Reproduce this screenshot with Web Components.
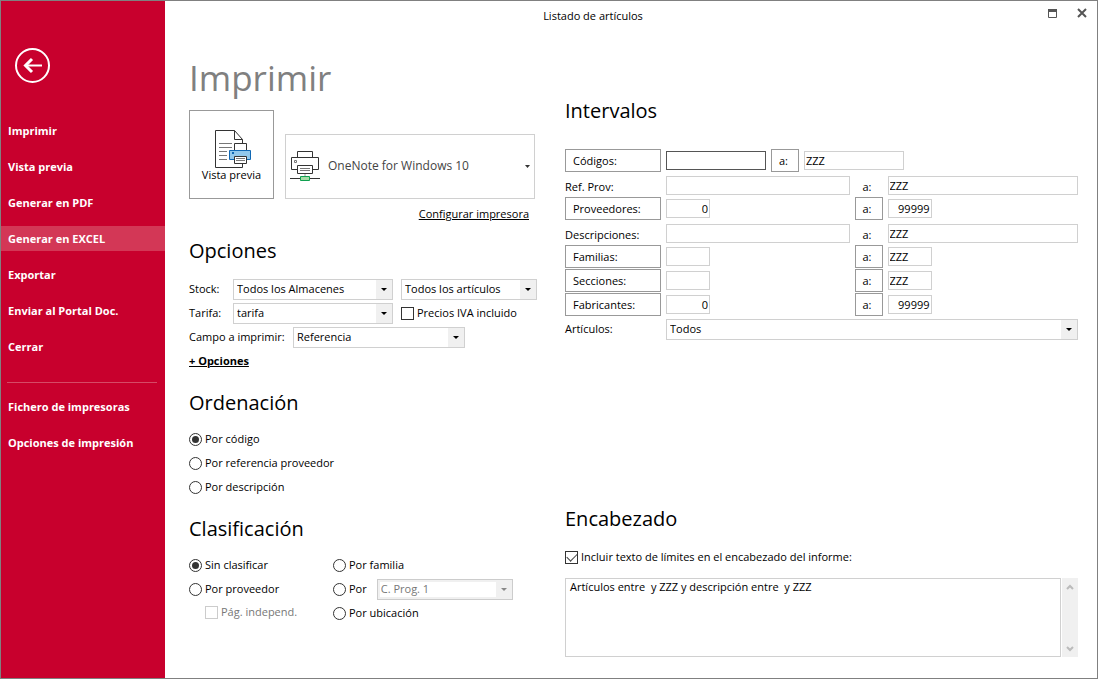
<!DOCTYPE html>
<html lang="es">
<head>
<meta charset="utf-8">
<title>Listado de artículos</title>
<style>
  body { margin: 0; font: 11px/16px "Open Sans", "Noto Sans", sans-serif; color: #000; background: #fff; }
</style>
</head>
<body>
<print-window></print-window>

<script>
const define = (name, html, setup) => {
  const template = document.createElement('template');
  template.innerHTML = `<style>*{box-sizing:border-box}button,input,select,textarea{font:inherit;color:inherit;margin:0;border-radius:0}</style>` + html;
  customElements.define(name, class extends HTMLElement {
    constructor() {
      super();
      this.attachShadow({ mode: 'open' }).append(template.content.cloneNode(true));
    }
    connectedCallback() {
      if (this.ready) return;
      this.ready = true;
      if (setup) setup(this, this.shadowRoot);
    }
  });
};

/* Sidebar link */
define('nav-item', `
  <style>
    :host { display: block; }
    a { display: block; padding: 0 7px; line-height: 25px; color: #fff; text-decoration: none; font-weight: 700; white-space: nowrap; }
    :host([active]) a { background: #d33756; }
    a:hover { background: #d33756; }
  </style>
  <a href="#"><slot></slot></a>`);

/* Red sidebar with the back button */
define('side-nav', `
  <style>
    :host { display: flex; flex-direction: column; background: #c8002d; color: #fff; padding-top: 47px; }
    .back { align-self: flex-start; margin-left: 14px; padding: 0; border: 0; background: none; width: 36px; height: 36px; }
    svg { display: block; }
    nav { display: flex; flex-direction: column; gap: 11px; margin-top: 34px; }
  </style>
  <button class="back" aria-label="Volver">
    <svg width="36" height="36" viewBox="0 0 36 36" fill="none" stroke="#fff">
      <circle cx="17.5" cy="17.5" r="16.5" stroke-width="2"/>
      <path d="M10 17.5h17" stroke-width="2"/>
      <path d="M17 11l-6.500 6.500 6.500 6.500" stroke-width="3"/>
    </svg>
  </button>
  <nav><slot></slot></nav>`);

/* Title bar with window controls */
define('title-bar', `
  <style>
    :host { display: flex; height: 30px; align-items: stretch; }
    .title { flex: 1; text-align: center; line-height: 30px; padding-right: 16px; }
    button { width: 30px; height: 24px; padding: 0; border: 0; background: none; display: grid; place-items: center; }
  </style>
  <div class="title"><slot></slot></div>
  <button aria-label="Maximizar"><svg width="9" height="9"><path d="M.5.5h8v8h-8z" fill="none" stroke="#555"/><path d="M0 0h9v3H0z" fill="#555"/></svg></button>
  <button aria-label="Cerrar ventana"><svg width="10" height="10"><path d="M1 1l8 8M9 1L1 9" stroke="#555" stroke-width="2"/></svg></button>`);

/* Headed block */
define('form-section', `
  <style>
    :host { display: block; }
    h2 { margin: 0 0 var(--head-gap, 8px); font-size: 20px; line-height: 32px; font-weight: 400; }
  </style>
  <h2></h2><slot></slot>`,
  (el, root) => root.querySelector('h2').textContent = el.getAttribute('heading'));

/* Drop-down, with an optional caption before it */
define('field-select', `
  <style>
    :host { display: flex; align-items: center; height: 24px; }
    label { width: var(--label, auto); flex: none; }
    .box { display: grid; grid-template-columns: 1fr 16px; flex: 1; height: 21px; border: 1px solid #d0d0d0; background: #fff; }
    select { grid-area: 1 / 1 / 2 / 3; min-width: 0; appearance: none; border: 0; background: none; padding: 0 18px 0 3px; outline-offset: -1px; opacity: 1; }
    .arrow { grid-area: 1 / 2; background: #f0f0f0; display: grid; place-items: center; pointer-events: none; }
    :host([disabled]) .box { background: #fff; border-color: #ccc; outline: 2px solid #f0f0f0; outline-offset: -3px; color: #777; fill: #888; }
  </style>
  <label for="s"></label>
  <div class="box">
    <select id="s"><option></option></select>
    <span class="arrow"><svg width="6" height="3"><path d="M0 0h6L3 3z"/></svg></span>
  </div>`,
  (el, root) => {
    const label = root.querySelector('label'), select = root.querySelector('select');
    const text = el.getAttribute('label');
    if (text) label.textContent = text;
    else { label.remove(); select.setAttribute('aria-label', el.getAttribute('name')); }
    root.querySelector('option').textContent = el.getAttribute('value');
    select.disabled = el.hasAttribute('disabled');
  });

/* Tick box or radio button with its label */
define('choice-item', `
  <style>
    :host { display: flex; align-items: center; height: 24px; }
    label { display: flex; align-items: center; gap: 3px; white-space: nowrap; }
    input { appearance: none; flex: none; width: 13px; height: 13px; border: 1px solid #333; background: #fff; display: grid; place-items: center; }
    input[type=radio] { border-radius: 50%; }
    input[type=radio]:checked::after { content: ""; width: 7px; height: 7px; border-radius: 50%; background: #333; }
    input[type=checkbox]:checked::after { content: ""; width: 9px; height: 5px; border: solid #444; border-width: 0 0 1px 1px; transform: translateY(-1px) rotate(-45deg); }
    input:disabled { border-color: #ccc; }
    :host([disabled]) { color: #777; }
  </style>
  <label><input><span><slot></slot></span></label>`,
  (el, root) => {
    const input = root.querySelector('input');
    input.type = el.getAttribute('type') || 'radio';
    input.checked = el.hasAttribute('checked');
    input.disabled = el.hasAttribute('disabled');
    el.input = input;
    input.addEventListener('change', () => {
      if (input.type !== 'radio') return;
      const group = el.getAttribute('group');
      el.getRootNode().querySelectorAll(`choice-item[group="${group}"]`).forEach(other => {
        if (other !== el) other.input.checked = false;
      });
    });
  });

/* One "from / to" line; "pick" turns its captions into lookup buttons */
define('range-row', `
  <style>
    :host { display: grid; grid-template-columns: 96px 184fr 28px 191fr; column-gap: 5px; align-items: center; height: 23px; }
    :host([size=code]) { grid-template-columns: 96px 100px 28px 100px; }
    button { height: 23px; border: 1px solid #999; background: #fff; padding: 0 7px; text-align: left; }
    label { line-height: 23px; padding-top: 2px; }
    button.to { padding: 0 7px; }
    label.to { padding-left: 8px; }
    input { width: 100%; height: 19px; border: 1px solid #d0d0d0; background: #fff; padding: 0 1px 1px; outline: 0; }
    :host([size=code]) .from { border-color: #555; }
    :host([size=short]) input { width: 44px; }
    :host([numeric]) input { text-align: right; }
  </style>
  <span class="cap" id="c"></span><input id="a" class="from"><span class="cap to" id="d">a:</span><input id="b">`,
  (el, root) => {
    const pick = el.hasAttribute('pick');
    const name = el.getAttribute('label');
    root.querySelectorAll('.cap').forEach((old, i) => {
      const cap = document.createElement(pick ? 'button' : 'label');
      cap.id = old.id;
      cap.className = old.className;
      cap.textContent = i ? 'a:' : name;
      if (!pick) cap.htmlFor = i ? 'b' : 'a';
      old.replaceWith(cap);
    });
    const [from, to] = root.querySelectorAll('input');
    from.value = el.getAttribute('from') || '';
    to.value = el.getAttribute('to') || '';
    from.setAttribute('aria-labelledby', 'c');
    to.setAttribute('aria-labelledby', 'c d');
  });

/* Preview button and printer chooser */
define('printer-panel', `
  <style>
    :host { display: grid; grid-template-columns: 85px 250px; column-gap: 11px; align-items: end; }
    svg { display: block; }
    .preview { height: 89px; border: 1px solid #999; background: #fff; padding: 2px 0 0; line-height: 14px; display: flex; flex-direction: column; align-items: center; justify-content: center; }
    .combo { height: 65px; display: grid; grid-template-columns: 42px 1fr 14px; align-items: center; border: 1px solid #d0d0d0; }
    select { grid-area: 1 / 1 / 2 / 4; height: 63px; appearance: none; background: none; border: 0; padding: 0 14px 2px 42px; font-size: 12px; color: #444; }
    .icon { grid-area: 1 / 1; padding-left: 4px; pointer-events: none; }
    .arrow { grid-area: 1 / 3; justify-self: center; pointer-events: none; }
    a { grid-column: 1 / 3; justify-self: end; color: #000; line-height: 20px; margin: 5px 6px 0 0; }
  </style>
  <button class="preview">
    <svg width="42" height="38" viewBox="-4 0 42 38" fill="#fff" stroke="#333">
      <path d="M.5.5h19l8 9v28H.5z"/><path d="M19.500.5v9h8" fill="none"/>
      <path d="M4 13.500h13M4 17.500h13M4 21.500h8M4 25.500h8M4 29.500h8" stroke="#777"/>
      <path d="M19.500 13.500h12v8h-12z"/>
      <path d="M14.500 20.500h21v9h-21z" fill="#91c8ec" stroke="#1068b4"/>
      <path d="M17 22h2v2h-2z" fill="#1068b4" stroke="none"/>
      <path d="M19.500 26.500h12v7h-12z"/><path d="M21 28.500h9M21 30.500h9" stroke="#777"/>
    </svg>
    <span>Vista previa</span>
  </button>
  <div class="combo">
    <select aria-label="Impresora"><option>OneNote for Windows 10</option></select>
    <span class="icon"><svg width="30" height="32" viewBox="0 0 30 32" fill="#fff" stroke="#333">
      <path d="M7.500.5h15v6h-15z"/><path d="M1.500 6.500h27v12h-27z"/>
      <path d="M4.500 9.500h2v2h-2z" stroke="#777"/>
      <path d="M7.500 14.500h15v8h-15z"/><path d="M10 17.500h10M10 19.500h10" stroke="#777"/>
      <path d="M15 23v2" stroke="#999"/><path d="M0 27.500h30"/>
      <path d="M10.500 25.500h9v4h-9z" fill="#a5dba5" stroke="#10a050"/>
    </svg></span>
    <span class="arrow"><svg width="5" height="3"><path d="M0 0h5L2.500 3z" fill="#333"/></svg></span>
  </div>
  <a href="#">Configurar impresora</a>`);

/* Multi-line text with an idle scroll bar */
define('header-text', `
  <style>
    :host { display: flex; gap: 1px; height: 79px; }
    textarea { flex: 1; min-width: 0; resize: none; overflow: hidden; border: 1px solid #d0d0d0; padding: 0 4px; line-height: 16px; }
    .bar { width: 16px; background: #f0f0f0; display: flex; flex-direction: column; justify-content: space-between; align-items: center; padding: 6px 0 5px; }
  </style>
  <textarea aria-label="Encabezado">Artículos entre  y ZZZ y descripción entre  y ZZZ</textarea>
  <div class="bar">
    <svg width="8" height="6"><path d="M1 5l3-3 3 3" fill="none" stroke="#bbb" stroke-width="2"/></svg>
    <svg width="8" height="6"><path d="M1 1l3 3 3-3" fill="none" stroke="#bbb" stroke-width="2"/></svg>
  </div>`);

/* Whole dialog */
define('print-window', `
  <style>
    :host { display: grid; grid-template-columns: 164px 1fr; min-height: 100vh; border: 1px solid #808080; box-sizing: border-box; background: #fff; }
    hr { width: 150px; margin: 12px 0 0 6px; border: 0; border-top: 1px solid #d64a66; }
    main { display: flex; flex-direction: column; min-width: 0; }
    .columns { flex: 1; display: grid; grid-template-columns: 348px 1fr; column-gap: 28px; padding: 23px 19px 21px 24px; }
    .left { display: flex; flex-direction: column; gap: 14px; }
    .right { display: flex; flex-direction: column; padding-top: 41px; }
    h1 { margin: 0 0 8px; font-size: 35px; line-height: 48px; font-weight: 400; color: #808080; }
    .options { --head-gap: 10px; margin-top: -3px; }
    .stock { display: grid; grid-template-columns: 204px 136px; column-gap: 8px; --label: 44px; }
    .stock [name] { --label: auto; }
    .field { --label: 104px; width: 276px; }
    .more { display: inline-block; line-height: 24px; color: #000; font-weight: 700; }
    .classes { display: grid; grid-template-columns: 144px 1fr; }
    .indent { margin-left: 16px; height: 22px; }
    .by { display: flex; gap: 10px; }
    .by field-select { width: 136px; }
    .ranges { --head-gap: 22px; }
    .rows { display: grid; gap: 1px; }
    .items { --label: 101px; }
    .head { margin-top: auto; --head-gap: 10px; }
    header-text { margin-top: 9px; }
  </style>
  <side-nav>
    <nav-item>Imprimir</nav-item>
    <nav-item>Vista previa</nav-item>
    <nav-item>Generar en PDF</nav-item>
    <nav-item active>Generar en EXCEL</nav-item>
    <nav-item>Exportar</nav-item>
    <nav-item>Enviar al Portal Doc.</nav-item>
    <nav-item>Cerrar</nav-item>
    <hr>
    <nav-item>Fichero de impresoras</nav-item>
    <nav-item>Opciones de impresión</nav-item>
  </side-nav>
  <main>
    <title-bar>Listado de artículos</title-bar>
    <div class="columns">
      <div class="left">
        <div><h1>Imprimir</h1><printer-panel></printer-panel></div>
        <form-section class="options" heading="Opciones">
          <div class="stock">
            <field-select label="Stock:" value="Todos los Almacenes"></field-select>
            <field-select name="Artículos en stock" value="Todos los artículos"></field-select>
            <field-select label="Tarifa:" value="tarifa"></field-select>
            <choice-item type="checkbox">Precios IVA incluido</choice-item>
          </div>
          <field-select class="field" label="Campo a imprimir:" value="Referencia"></field-select>
          <a class="more" href="#">+ Opciones</a>
        </form-section>
        <form-section heading="Ordenación">
          <choice-item group="order" checked>Por código</choice-item>
          <choice-item group="order">Por referencia proveedor</choice-item>
          <choice-item group="order">Por descripción</choice-item>
        </form-section>
        <form-section heading="Clasificación">
          <div class="classes">
            <div>
              <choice-item group="class" checked>Sin clasificar</choice-item>
              <choice-item group="class">Por proveedor</choice-item>
              <choice-item class="indent" type="checkbox" disabled>Pág. independ.</choice-item>
            </div>
            <div>
              <choice-item group="class">Por familia</choice-item>
              <div class="by">
                <choice-item group="class">Por</choice-item>
                <field-select name="Campo programable" value="C. Prog. 1" disabled></field-select>
              </div>
              <choice-item group="class">Por ubicación</choice-item>
            </div>
          </div>
        </form-section>
      </div>
      <div class="right">
        <form-section class="ranges" heading="Intervalos">
          <div class="rows">
            <range-row label="Códigos:" to="ZZZ" pick size="code"></range-row>
            <range-row label="Ref. Prov:" to="ZZZ"></range-row>
            <range-row label="Proveedores:" from="0" to="99999" pick size="short" numeric></range-row>
            <range-row label="Descripciones:" to="ZZZ"></range-row>
            <range-row label="Familias:" to="ZZZ" pick size="short"></range-row>
            <range-row label="Secciones:" to="ZZZ" pick size="short"></range-row>
            <range-row label="Fabricantes:" from="0" to="99999" pick size="short" numeric></range-row>
            <field-select class="items" label="Artículos:" value="Todos"></field-select>
          </div>
        </form-section>
        <form-section class="head" heading="Encabezado">
          <choice-item type="checkbox" checked>Incluir texto de límites en el encabezado del informe:</choice-item>
          <header-text></header-text>
        </form-section>
      </div>
    </div>
  </main>`);
</script>
</body>
</html>
